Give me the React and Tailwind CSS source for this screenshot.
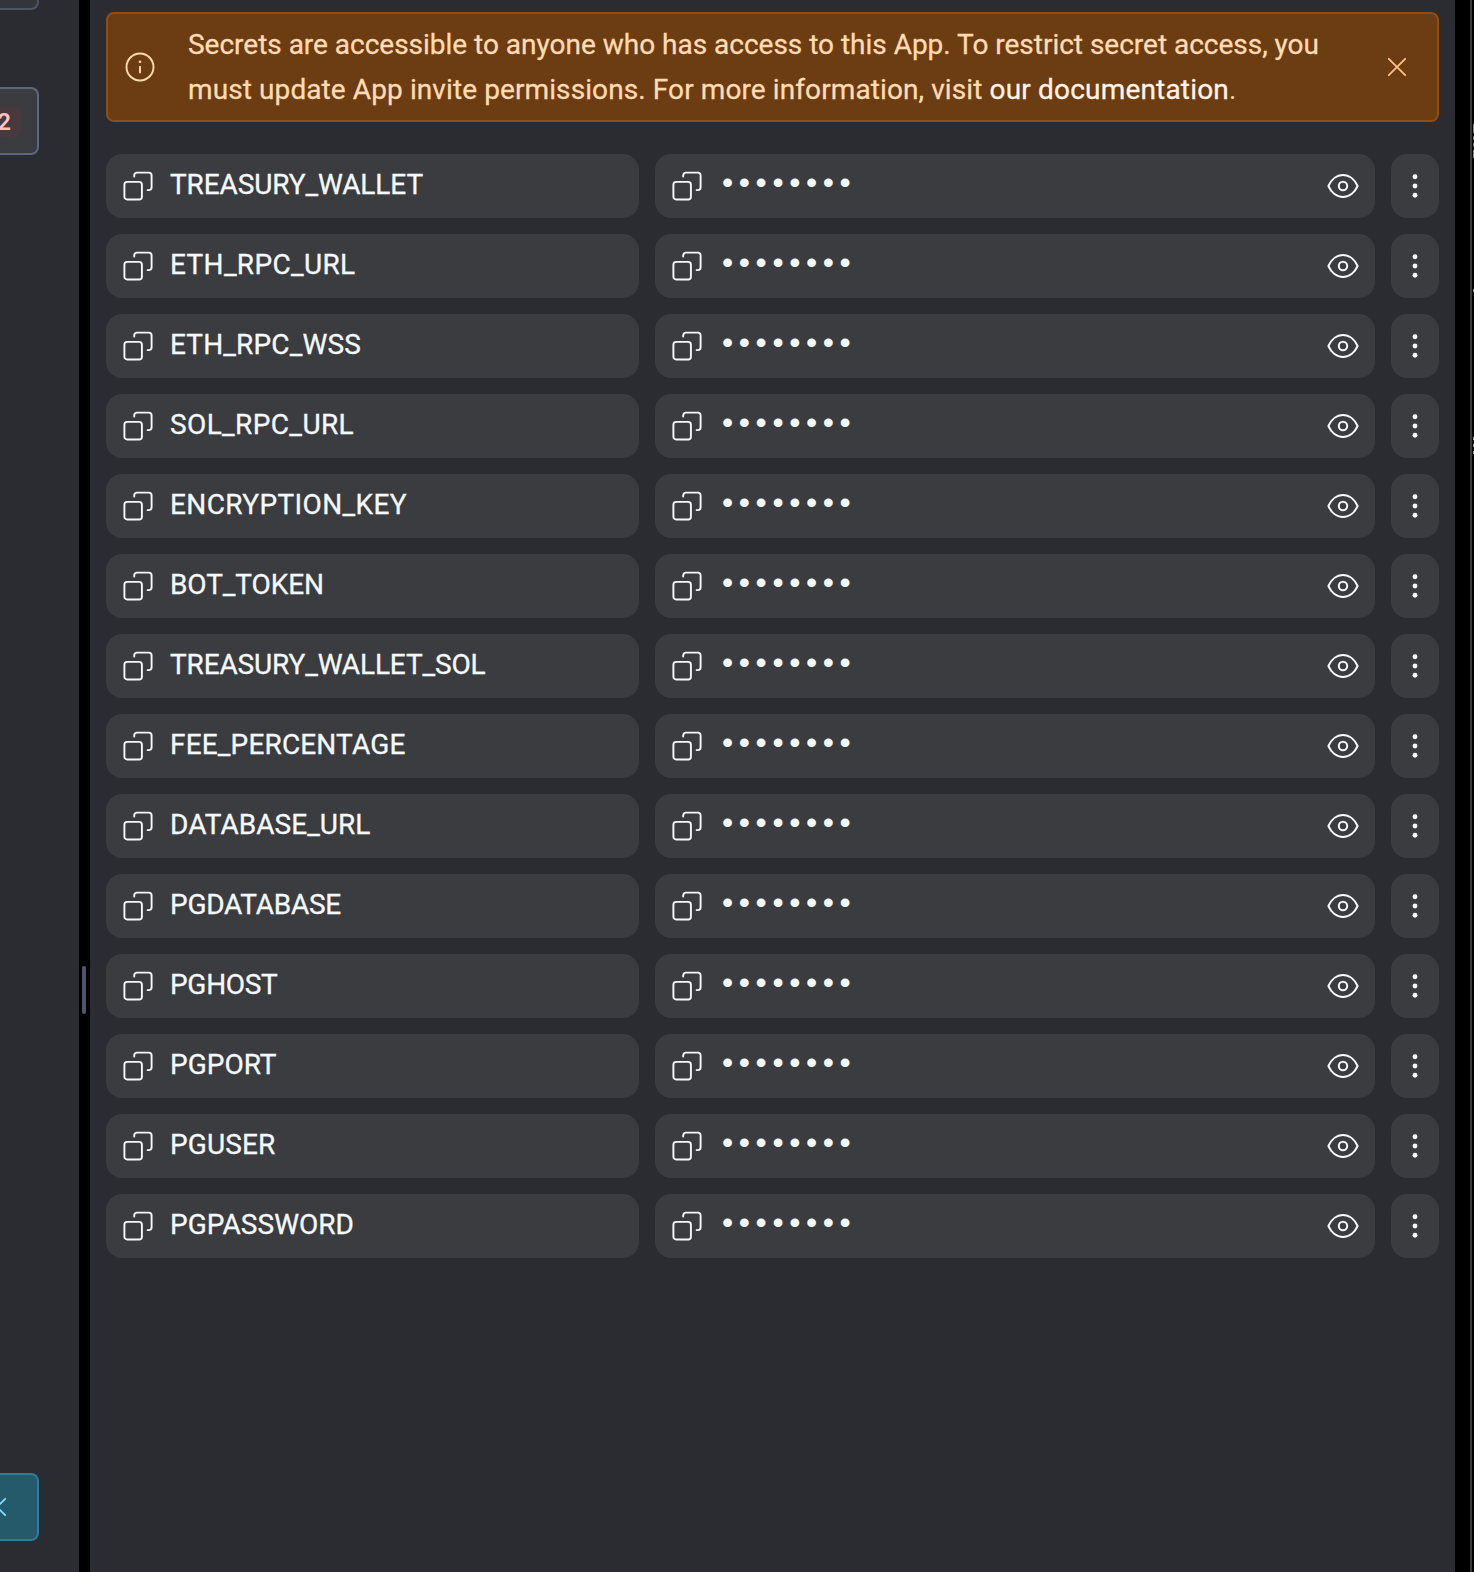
import { useLayoutEffect, useRef } from "react";

const secrets = [
  ["TREASURY_WALLET", 253],
  ["ETH_RPC_URL", 185.5],
  ["ETH_RPC_WSS", 191],
  ["SOL_RPC_URL", 184],
  ["ENCRYPTION_KEY", 237],
  ["BOT_TOKEN", 154],
  ["TREASURY_WALLET_SOL", 315.5],
  ["FEE_PERCENTAGE", 235.5],
  ["DATABASE_URL", 200.5],
  ["PGDATABASE", 171],
  ["PGHOST", 107.5],
  ["PGPORT", 106.5],
  ["PGUSER", 105.5],
  ["PGPASSWORD", 184],
];

// Spreads a single line of text over a given width through letter spacing.
function FitText({ width, className = "", children }) {
  const ref = useRef(null);
  useLayoutEffect(() => {
    const el = ref.current;
    el.style.letterSpacing = "0px";
    const natural = el.getBoundingClientRect().width;
    const count = el.textContent.length;
    el.style.letterSpacing = `${(width - natural) / count}px`;
  }, [width]);
  return (
    <span ref={ref} className={`inline-block whitespace-pre [-webkit-text-stroke:0.3px_currentColor] ${className}`}>
      {children}
    </span>
  );
}

function CopyIcon() {
  return (
    <svg className="size-8 shrink-0" viewBox="0 0 32 32" fill="none" stroke="#f5f9fc" strokeWidth="1.9" strokeLinecap="round">
      <rect x="2.4" y="11.9" width="17.5" height="17.6" rx="2.8" />
      <path d="M12.2 6.6V5.4a2.8 2.8 0 0 1 2.8-2.8h11.8a2.8 2.8 0 0 1 2.8 2.8v11.9a2.8 2.8 0 0 1-2.8 2.8h-1.2" />
    </svg>
  );
}

function EyeIcon() {
  return (
    <svg className="size-8 shrink-0" viewBox="0 0 32 32" fill="none" stroke="#f5f9fc" strokeWidth="2" strokeLinejoin="round">
      <path d="M1.4 16C4 10 9.400 5 16 5s12 5 14.600 11C28 22 22.600 27 16 27S4 22 1.400 16z" />
      <circle cx="16" cy="16" r="4.200" />
    </svg>
  );
}

function CloseIcon({ color }) {
  return (
    <svg className="size-8 shrink-0" viewBox="0 0 32 32" fill="none" stroke={color} strokeWidth="1.8" strokeLinecap="round">
      <path d="M7.800 7.800l16.400 16.400M24.200 7.800L7.800 24.200" />
    </svg>
  );
}

function SecretRow({ name, width }) {
  return (
    <div className="flex h-16 gap-4">
      <div className="flex w-[533px] items-center gap-4 rounded-2xl bg-[#3b3c40] px-4">
        <CopyIcon />
        <FitText width={width} className="-mt-[3px] text-[28px] leading-10">{name}</FitText>
      </div>
      <div className="flex flex-1 items-center rounded-2xl bg-[#3b3c40] px-4">
        <CopyIcon />
        <span className="mb-[9px] ml-[19px] flex-1 font-['Liberation_Sans'] text-[32px] leading-10 tracking-[5.600px]">
          ••••••••
        </span>
        <EyeIcon />
      </div>
      <button className="flex w-12 items-center justify-center rounded-2xl bg-[#3b3c40]">
        <svg className="size-8" viewBox="0 0 32 32" fill="#f5f9fc">
          <circle cx="16" cy="6.700" r="2.450" />
          <circle cx="16" cy="16" r="2.450" />
          <circle cx="16" cy="25.300" r="2.450" />
        </svg>
      </button>
    </div>
  );
}

export default function App() {
  return (
    <div className="flex h-[1572px] w-[1474px] overflow-hidden bg-black font-[Roboto,sans-serif] text-[#f5f9fc]">
      <aside className="flex w-[79px] flex-col bg-[#2b2c31]">
        <div className="h-[10px] w-[39px] rounded-br-lg border-r-2 border-b-2 border-[#4c5468] bg-[#34353a]" />
        <div className="mt-[77px] flex h-[68px] w-[39px] items-center rounded-r-lg border-2 border-l-0 border-[#5f677c] bg-[#3b3c40]">
          <div className="flex h-8 w-[21px] items-center justify-end overflow-hidden rounded-r-lg bg-[#473a3e] pt-[2px] pr-[10px] text-2xl font-semibold text-[#ffc2c0]">
            2
          </div>
        </div>
        <button className="mt-auto mb-[31px] flex h-[68px] w-[39px] items-center overflow-hidden rounded-r-lg border-2 border-l-0 border-[#307b95] bg-[#255a6b]">
          <span className="-ml-[19px]"><CloseIcon color="#85dcff" /></span>
        </button>
      </aside>

      <div className="flex w-[11px] items-center pt-[408px] pl-[3px]">
        <div className="h-12 w-1 rounded-full bg-[#4f566b]" />
      </div>

      <main className="flex w-[1365px] flex-col bg-[#2b2c31] px-4 pt-3">
        <div className="flex h-[110px] items-center rounded-lg border-2 border-[#914d14] bg-[#6c3c12] text-[#ffdbb3]">
          <svg className="ml-4 size-8 shrink-0" viewBox="0 0 32 32" fill="none" stroke="#ffdbb3" strokeWidth="1.900" strokeLinecap="round">
            <circle cx="16" cy="16" r="13.500" />
            <path d="M16 15.800v5.600" />
            <circle cx="16" cy="10.700" r="1.300" fill="#ffdbb3" stroke="none" />
          </svg>
          <div className="ml-8 flex-1 text-[28px] leading-[45px]">
            <FitText width={1131}>
              Secrets are accessible to anyone who has access to this App. To restrict secret access, you
            </FitText>
            <div className="flex">
              <FitText width={801.5}>{"must update App invite permissions. For more information, visit "}</FitText>
              <FitText width={239.5} className="text-[#fff3e6]">our documentation</FitText>
              <span>.</span>
            </div>
          </div>
          <button className="mr-6"><CloseIcon color="#ffc285" /></button>
        </div>

        <div className="mt-8 flex flex-col gap-4">
          {secrets.map(([name, width]) => (
            <SecretRow key={name} name={name} width={width} />
          ))}
        </div>
      </main>

      <div className="ml-[15px] w-[2px] bg-[#3a3a3a]" />
      <div className="ml-px flex w-px flex-col">
        <div className="mt-[124px] h-[9px] bg-[#8a8a8a]" />
        <div className="mt-[3px] h-1 bg-[#777777]" />
        <div className="mt-[3px] h-1 bg-[#777777]" />
        <div className="mt-[3px] h-2 bg-[#8a8a8a]" />
        <div className="mt-[131px] h-[3px] bg-[#999999]" />
        <div className="mt-[145px] h-[3px] bg-[#aaaaaa]" />
        <div className="mt-1 h-[3px] bg-[#aaaaaa]" />
        <div className="mt-1 h-[3px] bg-[#aaaaaa]" />
      </div>
    </div>
  );
}
